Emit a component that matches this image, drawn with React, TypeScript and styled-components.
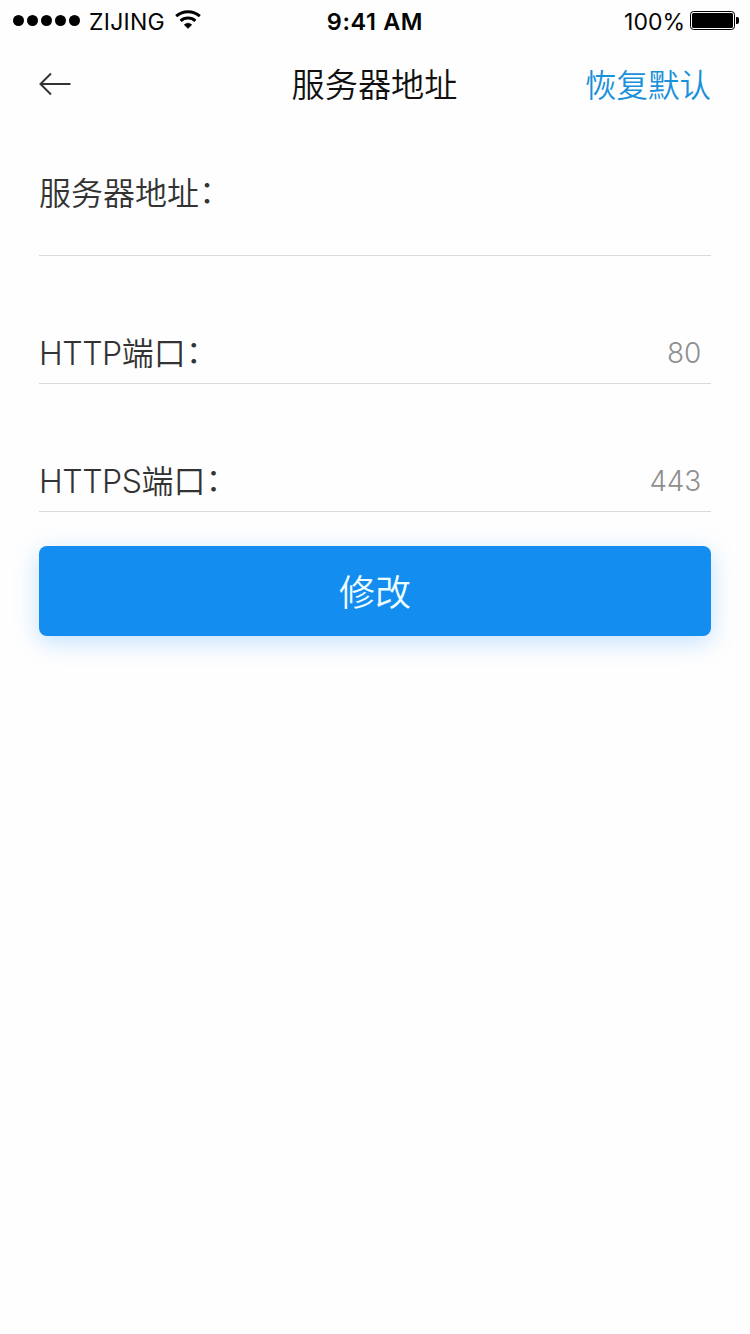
import React from "react";
import styled, { createGlobalStyle } from "styled-components";

const Global = createGlobalStyle`
  * { box-sizing: border-box; }
  body { margin: 0; background: #fff; font-family: Inter, "Noto Sans CJK SC", sans-serif; }
`;

const Screen = styled.main`
  width: 750px;
  height: 1334px;
  background: #fefefe;
  overflow: hidden;
`;

const StatusBar = styled.header`
  display: grid;
  grid-template-columns: 1fr auto 1fr;
  align-items: center;
  height: 40px;
  padding: 3px 11px 0 13px;
  font-size: 23px;
  line-height: 37px;
  color: #050505;
`;

const Carrier = styled.div`
  display: flex;
  align-items: center;
  letter-spacing: 0.25px;
`;

const CarrierName = styled.span`
  padding-top: 1px;
`;

const Signal = styled.div`
  display: flex;
  gap: 3px;
  margin: 0 9px 3px 0;
`;

const Dot = styled.i`
  width: 11px;
  height: 11px;
  border-radius: 50%;
  background: #000;
`;

const Wifi = styled.svg`
  margin: 0 0 5px 10px;
`;

const Clock = styled.time`
  margin-right: 2px;
  padding-bottom: 2px;
  font-weight: 600;
  font-size: 23.5px;
  line-height: 35px;
  letter-spacing: 0.6px;
`;

const Power = styled.div`
  display: flex;
  align-items: center;
  justify-content: flex-end;
  gap: 5px;
`;

const Percent = styled.span`
  padding-top: 1px;
`;

const Battery = styled.svg`
  margin-bottom: 2px;
`;

const NavBar = styled.nav`
  display: grid;
  grid-template-columns: 1fr auto 1fr;
  align-items: center;
  height: 88px;
  padding: 0 39px;
`;

const BackButton = styled.button`
  display: flex;
  padding: 0;
  border: 0;
  background: none;
`;

const Title = styled.h1`
  margin: 0 1px 3px 0;
  font-size: 33.2px;
  font-weight: 350;
  color: #111;
`;

const ResetButton = styled.button`
  justify-self: end;
  padding: 0 0 3px;
  border: 0;
  background: none;
  font: inherit;
  font-weight: 350;
  font-size: 31.5px;
  color: #1890da;
`;

const Form = styled.form`
  padding: 0 39px;
`;

const Field = styled.div<{ $bottom: number }>`
  display: flex;
  align-items: flex-end;
  justify-content: space-between;
  height: 128px;
  padding: 0 10px ${(p) => p.$bottom}px 0;
  border-bottom: 1px solid #d9d9d9;
  line-height: 44px;
`;

const Label = styled.label`
  font-size: 32px;
  font-weight: 350;
  color: #333;
`;

const Latin = styled.span`
  font-weight: 350;
  letter-spacing: -0.45px;
`;

const Colon = styled.span`
  position: relative;
  top: -2px;
  font-weight: 350;
`;

const Value = styled.span`
  padding-bottom: 1px;
  font-size: 28px;
  font-weight: 300;
  letter-spacing: -0.2px;
  color: #8e8e8e;
`;

const Submit = styled.button`
  display: block;
  width: 100%;
  height: 90px;
  margin-top: 34px;
  padding: 0 0 2px;
  border: 0;
  border-radius: 8px;
  background: #148df0;
  box-shadow: 0 6px 24px rgba(20, 141, 255, 0.26);
  font: inherit;
  font-weight: 350;
  font-size: 36px;
  color: #effeff;
`;

export default function App() {
  return (
    <Screen>
      <Global />
      <StatusBar>
        <Carrier>
          <Signal>
            {[0, 1, 2, 3, 4].map((n) => (
              <Dot key={n} />
            ))}
          </Signal>
          <CarrierName>ZIJING</CarrierName>
          <Wifi width="26" height="19" viewBox="0 0 26 19">
            <path d="M1.2 6.2C8 .2 18 .2 24.8 6.2M5.6 10.8c4.2-3.8 10.6-3.8 14.8 0" fill="none" stroke="#000" strokeWidth="3" />
            <path d="M13 18.5 9.2 14.8c2-2.2 5.6-2.2 7.6 0z" stroke="#000" strokeWidth=".5" />
          </Wifi>
        </Carrier>
        <Clock>9:41 AM</Clock>
        <Power>
          <Percent>100%</Percent>
          <Battery width="49" height="20" viewBox="0 0 49 20">
            <rect x=".5" y=".5" width="44" height="18" rx="3" fill="none" stroke="#000" />
            <rect x="2" y="2" width="41" height="15" rx="1.5" />
            <path d="M46 6h1q2 0 2 2v3q0 2-2 2h-1z" />
          </Battery>
        </Power>
      </StatusBar>
      <NavBar>
        <BackButton aria-label="返回">
          <svg width="32" height="24" viewBox="0 0 32 24" fill="none" stroke="#333" strokeWidth="2">
            <path d="M12 1.5 1.5 12 12 22.5M1.5 12h30" />
          </svg>
        </BackButton>
        <Title>服务器地址</Title>
        <ResetButton>恢复默认</ResetButton>
      </NavBar>
      <Form>
        <Field $bottom={39}>
          <Label>服务器地址<Colon>：</Colon></Label>
        </Field>
        <Field $bottom={7}>
          <Label><Latin>HTTP</Latin>端口<Colon>：</Colon></Label>
          <Value>80</Value>
        </Field>
        <Field $bottom={7}>
          <Label><Latin>HTTPS</Latin>端口<Colon>：</Colon></Label>
          <Value>443</Value>
        </Field>
        <Submit type="button">修改</Submit>
      </Form>
    </Screen>
  );
}
